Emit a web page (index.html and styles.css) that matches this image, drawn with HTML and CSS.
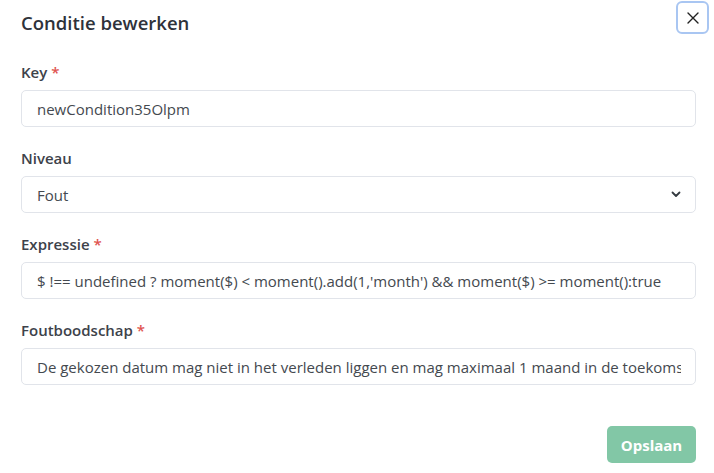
FILE: index.html
```html
<!DOCTYPE html>
<html lang="nl">
<head>
<meta charset="utf-8">
<title>Conditie bewerken</title>
<link rel="stylesheet" href="styles.css">
</head>
<body>
<div class="modal">
  <header class="modal-header">
    <h1 class="modal-title">Conditie bewerken</h1>
    <button class="close-btn" type="button" aria-label="Sluiten">
      <svg width="14" height="14" viewBox="0 0 14 14"><path d="M2 2L12 12M12 2L2 12" stroke="#222" stroke-width="1.4" stroke-linecap="round"/></svg>
    </button>
  </header>
  <form class="form">
    <div class="group">
      <label class="label">Key <span class="req">*</span></label>
      <div class="field">newCondition35Olpm</div>
    </div>
    <div class="group">
      <label class="label">Niveau</label>
      <div class="field select">
        <span>Fout</span>
        <svg width="10" height="7" viewBox="0 0 10 7"><path d="M1.5 1.5L5 5L8.5 1.5" fill="none" stroke="#343a40" stroke-width="1.8" stroke-linecap="round" stroke-linejoin="round"/></svg>
      </div>
    </div>
    <div class="group">
      <label class="label">Expressie <span class="req">*</span></label>
      <div class="field">$ !== undefined ? moment($) &lt; moment().add(1,'month') &amp;&amp; moment($) &gt;= moment():true</div>
    </div>
    <div class="group">
      <label class="label">Foutboodschap <span class="req">*</span></label>
      <div class="field clip"><span class="clip-inner">De gekozen datum mag niet in het verleden liggen en mag maximaal 1 maand in de toekomst liggen</span></div>
    </div>
    <div class="actions">
      <button class="save-btn" type="button" disabled>Opslaan</button>
    </div>
  </form>
</div>
</body>
</html>
```
FILE: styles.css
```css
* { box-sizing: border-box; }
html, body { margin: 0; padding: 0; background: #fff; }
body {
  font-family: "Open Sans", "Noto Sans", sans-serif;
  color: #343a40;
}
.modal {
  width: 714px;
  height: 473px;
  padding: 0 18px 0 21px;
}
.modal-header {
  display: flex;
  justify-content: space-between;
  align-items: flex-start;
  height: 62px;
}
.modal-title {
  margin: 10px 0 0 0;
  font-size: 18.5px;
  font-weight: 600;
  line-height: 25px;
  color: #2e323a;
}
.close-btn {
  margin-top: 1px;
  margin-right: -13px;
  width: 33px;
  height: 33px;
  border: 2px solid #a9c6f2;
  border-radius: 6px;
  background: #fff;
  display: flex;
  align-items: center;
  justify-content: center;
  padding: 0;
}
.form { width: 675px; }
.group { margin-bottom: 21px; }
.label {
  display: block;
  font-size: 15px;
  font-weight: 600;
  line-height: 21px;
  margin-bottom: 7px;
  color: #3d424a;
}
.req { color: #e0534f; }
.field {
  height: 37px;
  border: 1px solid #e1e4ea;
  border-radius: 5px;
  padding: 0 15px;
  display: flex;
  align-items: center;
  font-size: 15px;
  color: #44494f;
  white-space: nowrap;
  overflow: hidden;
}
.clip { padding-right: 14px; }
.clip-inner { overflow: hidden; display: block; }
.select { justify-content: space-between; padding-right: 14px; }
.actions {
  display: flex;
  justify-content: flex-end;
  padding-top: 20px;
}
.save-btn {
  width: 89px;
  height: 37px;
  border: none;
  border-radius: 5px;
  background: #82c7a6;
  color: #fff;
  font-family: "Open Sans", "Noto Sans", sans-serif;
  font-size: 15px;
  font-weight: 700;
}
```
